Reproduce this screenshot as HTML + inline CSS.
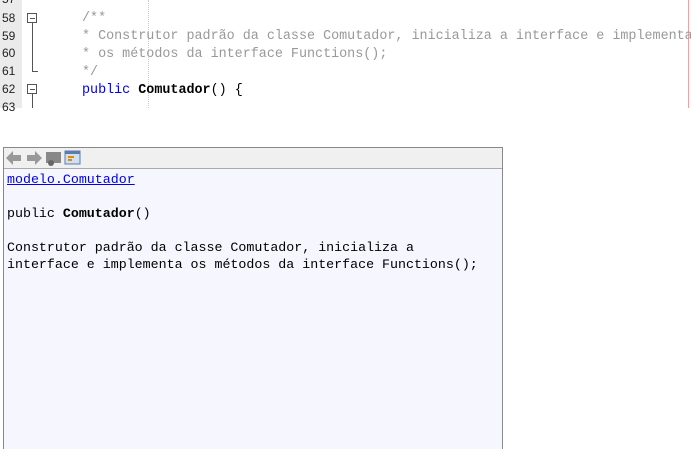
<!DOCTYPE html>
<html><head><style>
html,body{margin:0;width:691px;height:449px;overflow:hidden}
body{background:#fff;position:relative;font-family:"Liberation Mono",monospace}
.gut{position:absolute;left:0;top:0;width:22px;height:108px;background:#ebebeb}
.ln{position:absolute;left:2px;font:12px "Liberation Sans",sans-serif;color:#222}
.code{position:absolute;left:82px;font-size:13.4px;white-space:pre;color:#999;line-height:18px}
.box{position:absolute;left:27px;width:8px;height:8px;border:1px solid #555;background:#fff}
.box:after{content:"";position:absolute;left:2px;top:4px;width:5px;height:1px;background:#555}
</style></head><body>
<div class="gut"></div>
<div style="position:absolute;left:148px;top:0;height:108px;border-left:1px dotted #ccc"></div>
<div style="position:absolute;left:688px;top:0;width:1px;height:108px;background:#f0a0a0"></div>
<div class="ln" style="top:-8px">57</div>
<div class="ln" style="top:11px">58</div>
<div class="ln" style="top:29px">59</div>
<div class="ln" style="top:46px">60</div>
<div class="ln" style="top:64px">61</div>
<div class="ln" style="top:82px">62</div>
<div class="ln" style="top:100px">63</div>
<div class="box" style="top:13px"></div>
<div style="position:absolute;left:32px;top:23px;width:1px;height:49px;background:#555"></div>
<div style="position:absolute;left:32px;top:71px;width:6px;height:1px;background:#555"></div>
<div class="box" style="top:84px"></div>
<div style="position:absolute;left:32px;top:94px;width:1px;height:14px;background:#555"></div>
<div class="code" style="top:10px">/**
* Construtor padrão da classe Comutador, inicializa a interface e implementa
* os métodos da interface Functions();
*/
<span style="color:#00e">public</span> <b style="color:#000">Comutador</b><span style="color:#000">() {</span></div>
<div style="position:absolute;left:3px;top:147px;width:498px;height:310px;border:1px solid #888;background:#f5f6fe"></div>
<div style="position:absolute;left:4px;top:148px;width:498px;height:20px;background:#f0f0f0;border-bottom:1px solid #aaa"></div>
<svg style="position:absolute;left:5px;top:149px" width="80" height="18">
<path d="M1 9 L8 2 V6 H16 V12 H8 V16 Z" fill="#999"/>
<path d="M37 9 L30 2 V6 H22 V12 H30 V16 Z" fill="#999"/>
<rect x="41" y="3" width="15" height="11" fill="#888"/><circle cx="46" cy="14" r="3" fill="#666"/>
<rect x="60" y="2" width="15" height="13" fill="#cfe0f2" stroke="#5a7ea8"/><rect x="60" y="2" width="15" height="3" fill="#5a7ea8"/>
<path d="M63 8 h6 M63 11 h4" stroke="#e08a00" stroke-width="2"/>
</svg>
<div style="position:absolute;left:7px;top:171px;font-size:13.3px;line-height:17px;white-space:pre;color:#000"><span style="color:#00e;text-decoration:underline">modelo.Comutador</span>

public <b>Comutador</b>()

Construtor padrão da classe Comutador, inicializa a
interface e implementa os métodos da interface Functions();</div>
</body></html>
